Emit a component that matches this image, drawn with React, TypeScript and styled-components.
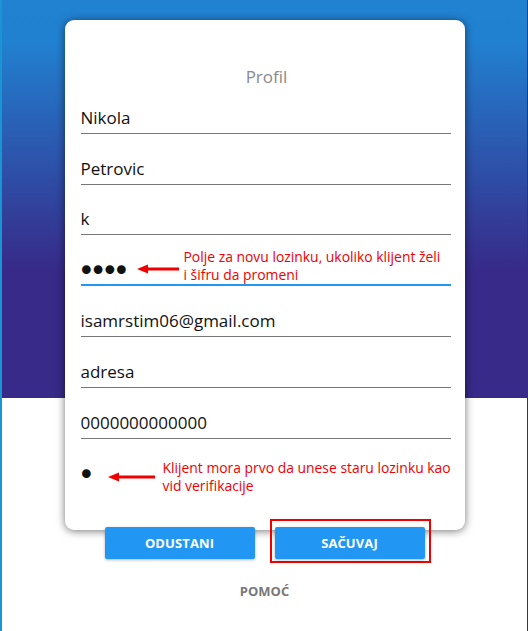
import React from "react";
import styled, { createGlobalStyle } from "styled-components";

const Global = createGlobalStyle`
  html, body { margin: 0; padding: 0; }
  body {
    font-family: "Open Sans", "Noto Sans", sans-serif;
    width: 528px;
    height: 631px;
    overflow: hidden;
  }
`;

const Page = styled.div`
  box-sizing: border-box;
  width: 528px;
  height: 631px;
  border-left: 2px solid #1a95d4;
  border-right: 1px solid #1d3a7a;
  background: linear-gradient(
    180deg,
    #2182d2 0px,
    #2181d1 40px,
    #372a88 270px,
    #372a88 398px,
    #ffffff 398px
  );
  display: flex;
  flex-direction: column;
  align-items: center;
  padding-top: 20px;
`;

const Card = styled.div`
  box-sizing: border-box;
  width: 400px;
  height: 510px;
  background: #fff;
  border-radius: 9px;
  box-shadow: 0 1px 8px rgba(0, 0, 0, 0.55);
  padding: 48px 14px 0 16px;
  display: flex;
  flex-direction: column;
`;

const Title = styled.div`
  text-align: center;
  font-size: 17px;
  line-height: 18px;
  color: #8a8a8a;
  padding-left: 2px;
`;

const Fields = styled.div`
  display: flex;
  flex-direction: column;
  margin-top: -3px;
`;

const Field = styled.div<{ $focused?: boolean; $bare?: boolean }>`
  position: relative;
  box-sizing: border-box;
  height: 50.8px;
  border-bottom: ${(p) =>
    p.$bare ? "none" : p.$focused ? "2px solid #2196f3" : "1px solid #787878"};
  display: flex;
  align-items: flex-end;
  padding-bottom: ${(p) => (p.$focused ? "4px" : "5px")};
`;

const Input = styled.input<{ $mask?: boolean }>`
  border: none;
  outline: none;
  padding: 0;
  margin: 0 0 0 ${(p) => (p.$mask ? "-3px" : "0")};
  width: 100%;
  background: transparent;
  font-family: ${(p) => (p.$mask ? '"DejaVu Sans", sans-serif' : '"Open Sans", sans-serif')};
  font-size: ${(p) => (p.$mask ? "30px" : "17px")};
  letter-spacing: ${(p) => (p.$mask ? "-6px" : "0")};
  line-height: 20px;
  height: 20px;
  color: #111;
`;

const Note = styled.div<{ $left: number; $top: number }>`
  position: absolute;
  left: ${(p) => p.$left}px;
  top: ${(p) => p.$top}px;
  color: #f00000;
  font-size: 13.9px;
  line-height: 18px;
  white-space: nowrap;
`;

const ArrowSvg = styled.svg<{ $left: number; $top: number }>`
  position: absolute;
  left: ${(p) => p.$left}px;
  top: ${(p) => p.$top}px;
`;

const Arrow = ({ left, top, width }: { left: number; top: number; width: number }) => (
  <ArrowSvg $left={left} $top={top} width={width} height={10} viewBox={`0 0 ${width} 10`}>
    <line x1={8} y1={5} x2={width} y2={5} stroke="#f00000" strokeWidth={3} />
    <polygon points={`0,5 11,0.5 11,9.5`} fill="#f00000" />
  </ArrowSvg>
);

const Actions = styled.div`
  position: relative;
  z-index: 1;
  margin-top: -3px;
  display: flex;
  gap: 20px;
`;

const Button = styled.button`
  box-sizing: border-box;
  width: 150px;
  height: 32px;
  border: none;
  border-radius: 2px;
  background: #2196f3;
  color: #fff;
  font-family: "Open Sans", sans-serif;
  font-weight: 700;
  font-size: 13px;
  letter-spacing: 0.1px;
  box-shadow: 0 1px 3px rgba(0, 0, 0, 0.3);
  cursor: pointer;
`;

const Highlight = styled.div`
  border: 2px solid #f00000;
  padding: 6px 4px 2px 3px;
  margin: -8px -6px -4px -5px;
`;

const Help = styled.div`
  margin-top: 24px;
  font-size: 13px;
  font-weight: 700;
  color: #787878;
  line-height: 16px;
`;

export default function App() {
  return (
    <>
      <Global />
      <Page>
        <Card>
          <Title>Profil</Title>
          <Fields>
            <Field>
              <Input defaultValue="Nikola" readOnly />
            </Field>
            <Field>
              <Input defaultValue="Petrovic" readOnly />
            </Field>
            <Field>
              <Input defaultValue="k" readOnly />
            </Field>
            <Field $focused>
              <Input type="password" defaultValue="abcd" $mask readOnly />
              <Arrow left={56} top={29} width={42} />
              <Note $left={103} $top={13}>
                Polje za novu lozinku, ukoliko klijent želi
                <br />i šifru da promeni
              </Note>
            </Field>
            <Field>
              <Input defaultValue="isamrstim06@gmail.com" readOnly />
            </Field>
            <Field>
              <Input defaultValue="adresa" readOnly />
            </Field>
            <Field>
              <Input defaultValue="0000000000000" readOnly />
            </Field>
            <Field $bare>
              <Input type="password" defaultValue="a" $mask readOnly />
              <Arrow left={27} top={33} width={47} />
              <Note $left={82} $top={20}>
                Klijent mora prvo da unese staru lozinku kao
                <br />
                vid verifikacije
              </Note>
            </Field>
          </Fields>
        </Card>
        <Actions>
          <Button>ODUSTANI</Button>
          <Highlight>
            <Button>SAČUVAJ</Button>
          </Highlight>
        </Actions>
        <Help>POMOĆ</Help>
      </Page>
    </>
  );
}
